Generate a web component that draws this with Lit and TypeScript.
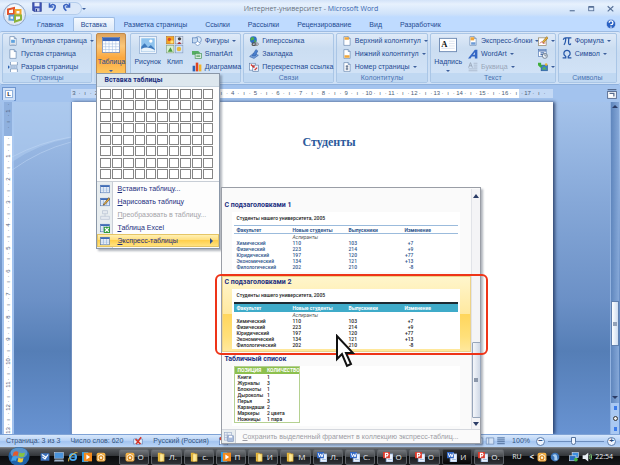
import { LitElement, html, css, svg, nothing, TemplateResult } from "lit";
import { customElement } from "lit/decorators.js";
import { classMap } from "lit/directives/class-map.js";

const sheet = svg`<path d="M3 1h7l3 3v11H3z" fill="#fff" stroke="#5b7da8"/><path d="M10 1v3h3" fill="#cfe0f4" stroke="#5b7da8"/>`;
const folder = svg`<path d="M3 1h5l2 2v12H3z" fill="#e8b93c"/><path d="M6 3h7v12H6z" fill="#fbe48b" stroke="#c9962a"/><path d="M8 3v12" stroke="#fff5c4"/>`;
const outlook = svg`<rect x="1" y="1" width="14" height="14" rx="3" fill="#f6b545"/><path d="M2 6l6-4 6 4v8H2z" fill="#fff4d6" stroke="#d8851b"/><circle cx="8" cy="9" r="3" fill="none" stroke="#d8851b" stroke-width="2"/>`;
const player = svg`<rect x="0" y="0" width="10" height="16" fill="#2c9be6"/><rect x="3" y="1" width="13" height="14" fill="#f38a1d"/><path d="M7 4l6 4-6 4z" fill="#fff"/>`;
const miniTable = svg`<rect x="1" y="2" width="14" height="12" fill="#fff" stroke="#4a71b0"/><rect x="1" y="2" width="14" height="3" fill="#3f6bb5"/><path d="M5.500 5v9M10.500 5v9M1 8h14M1 11h14" stroke="#8fb0dc"/>`;
const globe = svg`<circle cx="7" cy="6" r="5.500" fill="#2d6fc4"/><path d="M3 3q3-3 5 0t-2 3q-3 2-4 0zM8 7q3-1 4 1l-3 3z" fill="#4cae4a"/><rect x="5" y="11" width="6" height="4" rx="2" fill="none" stroke="#555" stroke-width="2"/><rect x="9" y="11" width="6" height="4" rx="2" fill="none" stroke="#888" stroke-width="1.500"/>`;

const ICONS: Record<string, TemplateResult> = {
  save: svg`<path d="M1 1h14v14H3l-2-2z" fill="#3f55b8" stroke="#2b3c8c"/><path d="M4 1h8v6H4z" fill="#e8edf9"/><path d="M5 10h7v5H5z" fill="#c3cce8"/><path d="M6 11h2v4H6z" fill="#2b3c8c"/>`,
  undo: svg`<path d="M4 2v6h6M4 8q5-7 9-2 1 4-4 8" fill="none" stroke="#3a62c0" stroke-width="2.500"/>`,
  redo: svg`<path d="M12 2v6H6M12 8Q7 1 3 6q-1 4 4 8" fill="none" stroke="#3a62c0" stroke-width="2.500"/>`,
  cover: svg`${sheet}<path d="M5 6h6v5H5z" fill="#5fa2dd"/><path d="M5 13h6" stroke="#5b7da8"/>`,
  blank: sheet,
  pagebreak: svg`<path d="M4 0v5h11V0M4 16v-5h11v5" fill="#fff" stroke="#5b7da8"/><path d="M4 8h12" stroke="#3e5f95" stroke-dasharray="2 1"/><path d="M0 5l3 3-3 3z" fill="#2c62b0"/>`,
  bigtable: svg`<rect x="0.500" y="0.500" width="31" height="27" fill="#fff" stroke="#3a62ad"/><rect x="1" y="1" width="30" height="6" fill="#3864b8"/><path d="M6.500 7v20M12.500 7v20M18.500 7v20M24.500 7v20M1 12h30M1 17h30M1 22h30" stroke="#a4bfe4"/>`,
  picture: svg`<rect x="1" y="1" width="30" height="30" fill="#eef4fb" stroke="#7d9cc6"/><rect x="4" y="4" width="24" height="24" fill="#8fc3ee"/><path d="M4 28V19l6-6 6 7 5-4 7 7v5z" fill="#3d79bd"/><path d="M4 28v-5q12-6 24 2v3z" fill="#e9f3fb"/><circle cx="21" cy="9" r="3" fill="#fff"/>`,
  clip: svg`<rect x="1" y="1" width="13" height="13" fill="#f5a623" stroke="#b8741a"/><circle cx="6" cy="6" r="3" fill="#d8472b"/><path d="M8 8h5v5H8z" fill="#ffe27a"/><rect x="17" y="1" width="13" height="13" fill="#dfe6f2" stroke="#7c8aa5"/><path d="M20 14q4-7 7 0z" fill="#a33"/><circle cx="24" cy="5" r="3" fill="#444"/><rect x="1" y="17" width="13" height="13" fill="#d9eed2" stroke="#7f9c7a"/><path d="M3 28l5-8 4 8z" fill="#4d9b3e"/><rect x="17" y="17" width="13" height="13" fill="#cfe2f8" stroke="#7d94bd"/><circle cx="23" cy="23" r="4" fill="#e3b73e"/>`,
  shapes: svg`<circle cx="10" cy="6" r="5" fill="#dce9f8" stroke="#4d78b4"/><rect x="1" y="3" width="8" height="8" fill="#c5daf2" stroke="#4d78b4"/><path d="M9 8l4 4-4 4-4-4z" fill="#fff" stroke="#4d78b4"/>`,
  smart: svg`<path d="M0 3h10l3 3-3 3H0z" fill="#54ae62"/><rect x="5" y="7" width="10" height="8" fill="#d8eedb" stroke="#3c8c4a"/><path d="M7 10h6M7 12h6" stroke="#3c8c4a"/>`,
  chart: svg`<rect x="1" y="6" width="4" height="9" fill="#2d62b5"/><rect x="6" y="1" width="4" height="14" fill="#e0431f"/><rect x="11" y="4" width="4" height="11" fill="#f2b32a"/>`,
  link: globe,
  bookmark: svg`<path d="M1 12l6-5 8 3-7 5z" fill="#7ea6dd" stroke="#2f5da6"/><path d="M5 11L11 1l3 2-4 8z" fill="#4a80cf" stroke="#2f5da6"/>`,
  crossref: svg`<rect x="1" y="2" width="9" height="11" fill="#fff" stroke="#5b7da8"/><rect x="6" y="5" width="9" height="10" fill="#e8effa" stroke="#5b7da8"/><path d="M3 4l5 5M8 9V5" stroke="#d0342c" stroke-width="2"/><path d="M9 13l4-4" stroke="#d0342c" stroke-width="2"/>`,
  header: svg`${sheet}<rect x="4" y="2" width="7" height="4" fill="#f0a63a"/>`,
  footer: svg`${sheet}<rect x="4" y="10" width="8" height="4" fill="#f0a63a"/>`,
  pagenum: svg`${sheet}<path d="M6 7h4M6 11h4M7 5v8M9 5v8" stroke="#4c617f"/>`,
  textbox: svg`<rect x="1" y="1" width="36" height="28" fill="#fff" stroke="#6f8bb4" stroke-width="2"/><path d="M21 7h12M21 12h12M21 17h12M5 22h28" stroke="#b6c6dc"/><text x="5" y="19" font-family="Liberation Serif, serif" font-size="18" font-weight="700" fill="#111">A</text>`,
  quick: svg`${sheet}<rect x="4" y="2" width="6" height="5" fill="#f0a63a"/><path d="M5 10h7v4H5z" fill="#6d9bd6"/>`,
  wordart: svg`<path d="M0 15L11 1h4v14h-4v-3H6l-2 3z" fill="#3467c4"/><path d="M8 9h3V5z" fill="#dce8fb"/>`,
  dropcap: svg`<path d="M1 9L4 1l3 8M2 6h4" fill="none" stroke="#9aa7ba" stroke-width="1.500"/><path d="M9 2h6M9 5h6M9 8h6M1 11h14M1 14h14" stroke="#9aa7ba"/>`,
  sign: svg`<rect x="1" y="3" width="12" height="12" fill="#fff" stroke="#8a7650"/><path d="M3 12q3-5 5 0l4-1" fill="none" stroke="#c33"/><path d="M7 9L14 1l2 2-7 8z" fill="#eab132" stroke="#8a6420"/>`,
  date: svg`<rect x="1" y="1" width="12" height="11" fill="#fff" stroke="#4a71b0"/><path d="M1 3h12M4 6h6M4 9h4" stroke="#4a71b0" stroke-width="2"/><circle cx="11" cy="11" r="4" fill="#eef4fc" stroke="#456"/><path d="M11 8v3h3" fill="none" stroke="#456"/>`,
  object: svg`<rect x="5" y="5" width="10" height="9" fill="#3c7fc7" stroke="#27598f"/><path d="M6 12l4-5 4 5z" fill="#57b651"/><path d="M0 1h5v4h3L4 9 0 5z" fill="#3fae3b"/><circle cx="13" cy="4" r="2" fill="#e6b53a"/>`,
  pi: svg`<path d="M2 6q1-3 4-3h9M6 3q0 8-3 11M11 3q-1 8 0 10 2 2 3-1" fill="none" stroke="#2456a8" stroke-width="2"/>`,
  omega: svg`<path d="M1 14h5v-2Q2 9 3 6q1-4 5-4t5 4q1 3-3 6v2h5" fill="none" stroke="#2456a8" stroke-width="2"/>`,
  help: svg`<circle cx="8" cy="8" r="7.500" fill="#2a62c4" stroke="#d7e6fb"/><path d="M5 6q0-3 3-3t3 3-3 3v1M8 12v2" fill="none" stroke="#fff" stroke-width="2"/>`,
  min: svg`<path d="M3 12h9" stroke="#566f96" stroke-width="2"/>`,
  max: svg`<rect x="3" y="5" width="9" height="7" fill="none" stroke="#566f96" stroke-width="1.500"/><path d="M3 5h9" stroke="#566f96" stroke-width="3"/>`,
  close: svg`<path d="M3 4l10 9M13 4L3 13" stroke="#566f96" stroke-width="2"/>`,
  table: miniTable,
  draw: svg`${miniTable}<path d="M6 11L14 1l2 2-8 9-3 1z" fill="#f0b23a" stroke="#5e4a2c"/>`,
  convert: svg`<path d="M4 1h8v5H4zM1 10h14v5H1zM8 6v4" fill="#e4e9f1" stroke="#9dabc2"/>`,
  excel: svg`${miniTable}<rect x="6" y="6" width="10" height="10" fill="#2f9a3d"/><path d="M8 8l6 6M14 8l-6 6" stroke="#fff" stroke-width="2"/>`,
  savesel: svg`<rect x="1" y="1" width="11" height="12" fill="#e9eef6" stroke="#98a9c6"/><path d="M1 5h11M1 9h11M5 1v12" stroke="#98a9c6"/><rect x="6" y="6" width="9" height="9" fill="#a9bbdb" stroke="#7c92b8"/><path d="M8 6h5v3H8z" fill="#fff"/>`,
  spell: svg`<path d="M1 5q4-2 7 1 3-3 7-1v8q-4-2-7 1-3-3-7-1z" fill="#e7f0fc" stroke="#5779ab"/><path d="M4 5l8 8M13 2L5 13" stroke="#d3352a" stroke-width="2.500"/>`,
  macro: svg`<rect x="1" y="3" width="13" height="11" fill="#fff" stroke="#4a71b0"/><path d="M1 5h13" stroke="#3f6bb5" stroke-width="3"/><circle cx="4" cy="4" r="3" fill="#d9402c"/>`,
  view: svg`<path d="M2 3h12v10H2zM6 3v10" fill="#d3e2f6" stroke="#6281ad"/>`,
  list: svg`<path d="M2 3h12M2 6h12M2 9h12M2 12h12" stroke="#6281ad" stroke-width="2"/>`,
  mail: svg`<rect x="1" y="2" width="14" height="12" rx="1" fill="#3d72bd"/><path d="M3 4l6 4M13 4l-5 7-4-3" stroke="#fff" stroke-width="2" fill="none"/>`,
  desk: svg`<rect x="1" y="1" width="14" height="9" fill="#4a93da" stroke="#b4cbe6"/><path d="M1 12h14l1 3H0z" fill="#9fb4cc"/>`,
  ie: svg`<circle cx="8" cy="8" r="5" fill="none" stroke="#48a8f0" stroke-width="3"/><path d="M4 8h9" stroke="#48a8f0" stroke-width="2"/><path d="M1 15Q-1 11 6 5T15 1" fill="none" stroke="#f0c23d" stroke-width="1.500"/>`,
  player,
  outlook,
  folder,
  word: svg`<path d="M5 3h11v13H5z" fill="#e9f1fc" stroke="#7aa0d4"/><rect x="0" y="0" width="11" height="10" fill="#2f66c4"/><path d="M2 2l2 6 2-5 2 5 2-6" fill="none" stroke="#fff" stroke-width="1.500"/><path d="M8 12h6" stroke="#7aa0d4"/>`,
  ppt: svg`<path d="M5 3h11v13H5z" fill="#e9f1fc" stroke="#7aa0d4"/><rect x="0" y="0" width="11" height="10" fill="#dc3a2c"/><path d="M4 9V2h3q2 2 0 4H4" fill="none" stroke="#fff" stroke-width="2"/><path d="M8 12h6" stroke="#7aa0d4"/>`,
  agent: svg`<circle cx="8" cy="8" r="7" fill="#3b74b8"/><path d="M4 5q5-3 7 1l1 7H7V8z" fill="#a9cdf0"/>`,
  net: svg`<rect x="5" y="1" width="10" height="8" fill="#3d8fdf" stroke="#cfe0f2"/><rect x="1" y="6" width="10" height="8" fill="#2c6fc0" stroke="#cfe0f2"/><circle cx="11" cy="12" r="3" fill="#45b548"/>`,
  sound: svg`<path d="M1 5h4l5-4v14l-5-4H1z" fill="#e8eef4"/><path d="M12 5q2 3 0 6M14 3q3 5 0 10" fill="none" stroke="#7fd07b" stroke-width="1.500"/>`,
  pane: svg`<rect x="1" y="4" width="14" height="11" fill="#fff" stroke="#556a8e" stroke-width="1.500"/><path d="M4 7h7v5M1 1h14" fill="none" stroke="#556a8e" stroke-width="2"/>`,
};

const icon = (name: string, box = "0 0 16 16", cls = "ic") =>
  html`<svg class=${cls} viewBox=${box} aria-hidden="true">${ICONS[name]}</svg>`;

interface Cmd { icon: string; text: string; arrow?: boolean; off?: boolean }
const cmd = (i: string, text: string, arrow = false, off = false): Cmd => ({ icon: i, text, arrow, off });

const TABS = ["Главная", "Вставка", "Разметка страницы", "Ссылки", "Рассылки", "Рецензирование", "Вид", "Разработчик"];
const FACULTIES = [
  ["Химический", "110", "103", "+7"],
  ["Физический", "223", "214", "+9"],
  ["Юридический", "197", "120", "+77"],
  ["Экономический", "134", "121", "+13"],
  ["Филологический", "202", "210", "-8"],
];
const STOCK = [
  ["Книги", "1"], ["Журналы", "3"], ["Блокноты", "1"], ["Дыроколы", "1"],
  ["Перья", "3"], ["Карандаши", "2"], ["Маркеры", "2 цвета"], ["Ножницы", "1 пара"],
];
const TASKS = [
  ["outlook", "О"], ["folder", "Л."], ["folder", "с."], ["player", "П"], ["folder", "И"], ["folder", "М"],
  ["word", "Л."], ["word", "С."], ["ppt", "О"], ["ppt", "О"], ["word", "И"], ["ppt", "О."],
];

/* One centimetre of a ruler is four marks: number, dot, half tick, dot. */
const rulerMarks = (count: number, first: number, offset: number) =>
  Array.from({ length: count }, (_, i) => {
    const k = i + offset;
    const n = Math.abs(first + Math.floor(k / 4));
    return k % 4 === 0 ? (n && n < 18 ? String(n) : "") : k % 4 === 2 ? "ı" : "·";
  });

@customElement("table-menu")
export class TableMenu extends LitElement {
  static styles = css`
    :host { display: block; width: 124px; box-sizing: border-box; background: #fdfdfd; border: 1px solid #8a97a8; box-shadow: 2px 2px 2px rgba(60, 70, 90, 0.4); color: #1c2f80; font-size: 7px; line-height: 13px; }
    * { box-sizing: border-box; }
    button { font: inherit; color: inherit; background: none; border: 0; padding: 0; margin: 0; text-align: left; display: flex; align-items: center; white-space: nowrap; }
    .head { background: #dde7ee; border-bottom: 1px solid #c5d2de; font-family: Roboto, sans-serif; font-weight: 700; padding-left: 7px; margin: 0; font-size: 7px; height: 13px; }
    .grid { display: grid; grid-template-columns: repeat(10, 1fr); grid-auto-rows: 10px; gap: 1px; padding: 2px 6px 2px 3px; border-bottom: 1px solid #c8ced6; height: 95px; align-content: space-between; }
    .grid button { background: #fff; border: 1px solid #858585; height: 10px; }
    .items { background: linear-gradient(90deg, #e9eef0 15px, #c9ced6 15px, #c9ced6 16px, #fdfdfd 16px); padding-bottom: 1px; }
    .items button { width: 100%; height: 13px; gap: 7px; padding-left: 3px; }
    .ic { width: 10px; height: 10px; flex: none; }
    .off { color: #a3a3a8; }
    .off .ic { opacity: 0.7; }
    .hot { background: linear-gradient(#fff4bf, #ffdf7f 45%, #ffcf4c 50%, #ffe68a); outline: 1px solid #e5c566; outline-offset: -1px; }
    .tip { margin-left: auto; margin-right: 6px; width: 0; height: 0; border: 3px solid transparent; border-left-color: #2d4f93; border-right: 0; }
    u { text-decoration-thickness: 1px; text-underline-offset: 1px; }
  `;
  private item(ic: string, text: string, cls = "") {
    return html`<button class=${cls} ?disabled=${cls === "off"}>${icon(ic)}<span><u>${text[0]}</u>${text.slice(1)}</span>${cls === "hot" ? html`<i class="tip"></i>` : nothing}</button>`;
  }
  render() {
    return html`
      <h2 class="head">Вставка таблицы</h2>
      <div class="grid">${Array.from({ length: 80 }, (_, i) => html`<button aria-label=${`${(i % 10) + 1} x ${Math.floor(i / 10) + 1}`}></button>`)}</div>
      <div class="items">
        ${this.item("table", "Вставить таблицу...")}
        ${this.item("draw", "Нарисовать таблицу")}
        ${this.item("convert", "Преобразовать в таблицу...", "off")}
        ${this.item("excel", "Таблица Excel")}
        ${this.item("table", "Экспресс-таблицы", "hot")}
      </div>`;
  }
}

@customElement("quick-tables")
export class QuickTables extends LitElement {
  static styles = css`
    :host { display: flex; flex-direction: column; width: 260px; box-sizing: border-box; background: #fafafa; border: 1px solid #9a9ea6; box-shadow: 2px 2px 2px rgba(60, 70, 90, 0.4); color: #1c2f80; font-size: 7px; }
    * { box-sizing: border-box; }
    .body { display: flex; padding-top: 1px; }
    .list { flex: 1; padding-top: 10px; height: 240px; }
    section { position: relative; height: 77px; padding: 0 11px 0 10px; }
    h3 { margin: 0 0 0 -8px; font-family: Roboto, sans-serif; font-size: 7px; line-height: 12px; height: 13px; }
    .thumb { background: #fff; height: 60px; padding: 2px 2px 0 2px; font-family: Roboto, sans-serif; font-size: 5px; line-height: 6px; color: #2f568c; }
    .cap { color: #222; font-weight: 500; padding: 0 2px; height: 11px; line-height: 8px; margin: 0; }
    table { border-collapse: collapse; table-layout: fixed; width: 100%; font-weight: 500; }
    th, td { padding: 0 2px; text-align: left; height: 6px; line-height: 6px; white-space: nowrap; }
    th { height: 8px; border-top: 1px solid #9bbbdc; border-bottom: 1px solid #9bbbdc; }
    .r span { display: inline-block; width: 9px; text-align: right; }
    .sub td { font-style: italic; font-weight: 400; color: #555; }
    .hot { background: linear-gradient(#fff6cd, #ffe9a0 50%, #ffd65c 50%, #ffe07a 80%, #ffe9a0); outline: 1px solid #ecd28a; outline-offset: -1px; z-index: 2; height: 76px; margin-bottom: 1px; }
    .hot .thumb { color: #222; }
    .hot th { background: #3fabc9; color: #fff; border-top: 2px solid #1c2a33; border-bottom: 0; height: 9px; }
    .mark { position: absolute; left: -7px; top: -2px; right: -17px; bottom: -3px; border: 2px solid #ee3418; border-radius: 6px; pointer-events: none; }
    .cursor { position: absolute; left: 113px; top: 58px; width: 20px; height: 34px; }
    .stock { width: 66px; border: 1px solid #b5d191; color: #222; }
    .stock th { background: #8dc04e; color: #fff; height: 7px; border: 0; }
    .stock th:first-child { width: 30px; }
    .last .thumb { padding-top: 0; }
    .bar { width: 9px; display: flex; flex-direction: column; align-items: center; background: #f4f4f6; border-left: 1px solid #e1e3e8; padding: 5px 0 3px; }
    .up, .down { width: 0; height: 0; border: 3px solid transparent; }
    .up { border-bottom: 4px solid #2b3c66; border-top: 0; }
    .down { border-top: 4px solid #2b3c66; border-bottom: 0; }
    .space { flex: 1; }
    .knob { width: 9px; height: 76px; margin-bottom: 4px; border: 1px solid #97a5ba; border-radius: 1px; background: linear-gradient(90deg, #f5f7fb, #cfd8e6); display: grid; place-items: center; }
    .grip { width: 4px; height: 4px; background: #8c98ab; }
    .foot { font: inherit; text-align: left; border: 0; border-top: 1px solid #d5d8de; margin: 0; padding: 0; background: linear-gradient(90deg, #e9eef0 13px, #c9ced6 13px, #c9ced6 14px, #fafafa 14px); color: #9c9ca4; display: flex; align-items: center; gap: 8px; height: 14px; font-size: 7px; white-space: nowrap; }
    .ic { width: 10px; height: 10px; margin-left: 2px; }
  `;
  private faculties() {
    return html`
      <div class="thumb">
        <p class="cap">Студенты нашего университета, 2005</p>
        <table>
          <tr><th>Факультет</th><th>Новые студенты</th><th>Выпускники</th><th>Изменение</th></tr>
          <tr class="sub"><td></td><td>Аспиранты</td><td></td><td></td></tr>
          ${FACULTIES.map((r) => html`<tr><td>${r[0]}</td><td>${r[1]}</td><td>${r[2]}</td><td class="r"><span>${r[3]}</span></td></tr>`)}
        </table>
      </div>`;
  }
  render() {
    return html`
      <div class="body">
        <div class="list">
          <section><h3>С подзаголовками 1</h3>${this.faculties()}</section>
          <section class="hot">
            <h3>С подзаголовками 2</h3>${this.faculties()}
            <div class="mark"></div>
            <svg class="cursor" viewBox="0 0 20 34" aria-hidden="true"><path d="M2 2v23l5-5 5 12 4-2-5-11h7z" fill="#fff" stroke="#111" stroke-width="2"/></svg>
          </section>
          <section class="last">
            <h3>Табличный список</h3>
            <div class="thumb">
              <table class="stock">
                <tr><th>ПОЗИЦИЯ</th><th>КОЛИЧЕСТВО</th></tr>
                ${STOCK.map((r) => html`<tr><td>${r[0]}</td><td>${r[1]}</td></tr>`)}
              </table>
            </div>
          </section>
        </div>
        <div class="bar"><i class="up"></i><i class="space"></i><div class="knob"><i class="grip"></i></div><i class="down"></i></div>
      </div>
      <button class="foot" disabled>${icon("savesel")}<span><u>С</u>охранить выделенный фрагмент в коллекцию экспресс-таблиц...</span></button>`;
  }
}

@customElement("app-root")
export class AppRoot extends LitElement {
  static styles = css`
    :host { display: flex; flex-direction: column; min-height: 100vh; position: relative; overflow: hidden; font-family: "Liberation Sans", Arial, sans-serif; font-size: 7px; line-height: 13px; color: #1e4a92; background: #bfdbff; }
    * { box-sizing: border-box; }
    button { font: inherit; color: inherit; background: none; border: 0; padding: 0; margin: 0; white-space: nowrap; }
    .ic { width: 10px; height: 10px; flex: none; }
    .arr { width: 0; height: 0; border: 2px solid transparent; border-top-color: #3c5f9c; border-bottom: 0; flex: none; }

    .top { position: relative; background: linear-gradient(#d3e3f8, #e7f1fd 4px, #cfe2fa 14px, #bfdbff 17px); }
    .title { display: flex; align-items: center; height: 17px; padding-left: 32px; }
    .qat { display: flex; align-items: center; gap: 5px; width: 50px; height: 13px; border-radius: 0 7px 7px 0; border: 1px solid #b4cdec; border-left: 0; background: #dbe8f9; }
    .name { flex: 1; text-align: center; color: #3967b0; font-family: "Open Sans", sans-serif; padding-right: 32px; }
    .name span { color: #6a7380; }
    .win { display: flex; gap: 10px; padding-right: 5px; }
    .win .ic { width: 9px; height: 9px; }
    .win button { display: flex; }
    .orb { position: absolute; left: 3px; top: 3px; width: 23px; height: 23px; z-index: 3; }
    .tabs { display: flex; align-items: stretch; height: 14px; padding: 0 4px 0 28px; }
    .tabs button { padding: 0 9px; border-radius: 2px 2px 0 0; }
    .tabs .on { background: linear-gradient(#f4f9ff, #dbe8f8); border: 1px solid #9dbbe2; border-bottom: 0; padding: 0 7px; }
    .tabs .help { margin-left: auto; align-self: center; display: flex; padding: 0; }

    .ribbon { display: flex; gap: 2px; height: 54px; padding: 1px 3px 1px 2px; background: linear-gradient(#d9e7f8, #c9dcf2 40%, #cfe1f6); border-top: 1px solid #9dbbe2; border-bottom: 1px solid #8fb1dd; border-radius: 2px; }
    .group { display: flex; flex-direction: column; border: 1px solid #aac6e6; border-radius: 2px; background: linear-gradient(#dfeaf8, #cbddf1 30%, #d3e4f8); min-width: 0; }
    .in { display: flex; flex: 1; min-height: 0; }
    .label { height: 9px; line-height: 9px; text-align: center; background: #c0d8f2; color: #4a74b2; }
    .col { display: flex; flex-direction: column; min-width: 0; }
    .cmd { display: flex; align-items: center; gap: 3px; height: 13px; padding: 0 3px; }
    .cmd.off { color: #98a5b8; }
    .big { position: relative; display: flex; flex-direction: column; align-items: center; padding: 2px 0 0; line-height: 11px; gap: 2px; }
    .pic { width: 18px; height: 18px; flex: none; }
    .big .arr { margin-top: 1px; }
    .tab-wrap { position: relative; width: 34px; z-index: 5; display: flex; background: linear-gradient(#dfeaf8, #cbddf1 30%, #c0d8f2); }
    .tab-wrap .big { margin-left: 2px; width: 30px; height: 50px; background: linear-gradient(#dfa45c, #fbc778 25%, #fba83f 50%, #ffd873); border: 1px solid #c08a4c; border-radius: 2px; }
    .drop { position: absolute; left: 2px; top: 40px; }
    .fly { position: absolute; left: 127px; top: 154px; }
    .g1 { flex: 91 1 0; } .g3 { flex: 112 1 0; } .g4 { flex: 91 1 0; } .g5 { flex: 93 1 0; } .g6 { flex: 127 1 0; } .g7 { flex: 59 1 0; }
    .g3 .in { gap: 5px; padding-left: 3px; }
    .g1 .in, .g4 .in, .g5 .in { padding-left: 2px; }
    .g6 .in { padding-left: 3px; gap: 3px; }

    .ruler { display: flex; height: 17px; background: #a3c3ee; align-items: center; padding: 0 3px 0 2px; }
    .corner { width: 14px; height: 14px; border: 1px solid #6f96cf; background: #cfe0f7; display: grid; place-items: center; color: #223; }
    .corner b { width: 8px; height: 8px; border: 1px solid #8fb1dd; background: #fff; line-height: 6px; font-size: 6px; text-align: center; }
    .hr { flex: 1; margin: 0 54px 0 55px; height: 9px; display: flex; background: linear-gradient(90deg, #c4d9f5 15%, #fff 15%, #fff 93%, #c4d9f5 93%); color: #4b5d78; font-size: 6px; line-height: 9px; }
    .hr span, .vr span { flex: 1 1 0; min-width: 0; min-height: 0; display: flex; justify-content: center; align-items: center; }

    .work { flex: 1; display: flex; min-height: 0; background: linear-gradient(#a5c3eb, #86a8d8 30%, #6b90c6 60%, #557eb6 75%, #6893d2); }
    .vr { width: 8px; margin-left: 4px; display: flex; flex-direction: column; color: #4b5d78; font-size: 6px; line-height: 8px; background: linear-gradient(#8fb0de 34px, #fff 34px); outline: 2px solid #a3c3ee; }
    .vr span { writing-mode: vertical-rl; transform: rotate(180deg); }
    .swoosh { width: 59px; align-self: stretch; flex: none; }
    .page { flex: 1; background: #fff; box-shadow: 2px 0 3px rgba(30, 50, 90, 0.8); border-left: 1px solid #6f8fc0; }
    h1 { margin: 32px 0 0; padding-left: 33px; text-align: center; font: 700 12px/16px "Liberation Serif", serif; color: #2c5a9c; }
    .gutter { width: 57px; }
    .vbar { width: 9px; margin-right: 1px; background: linear-gradient(90deg, #5f86bd, #86a8d8); display: flex; flex-direction: column; align-items: center; padding-top: 3px; border-left: 1px solid #93b3e0; }
    .up, .down { width: 0; height: 0; border: 3px solid transparent; flex: none; }
    .up { border-bottom: 3px solid #2b3c66; border-top: 0; }
    .down { border-top: 3px solid #2b3c66; border-bottom: 0; margin-bottom: 4px; }
    .s1 { flex: 194; } .s2 { flex: 50; }
    .knob { width: 8px; height: 45px; border: 1px solid #5f7fae; background: linear-gradient(90deg, #fff, #cddcf0); display: grid; place-items: center; flex: none; }
    .grip { width: 4px; height: 4px; background: #93a2b9; }
    .nav { width: 8px; height: 31px; background: #a9c8f2; display: flex; flex-direction: column; align-items: center; justify-content: space-around; flex: none; }
    .nav i { width: 3px; height: 4px; background: #3c7bea; }
    .nav b { width: 5px; height: 5px; border: 1px solid #333; border-radius: 50%; background: #eee; }

    .status { display: flex; align-items: center; height: 13px; background: linear-gradient(#d9e8fb, #b8d3f6 45%, #a3c4f0 55%, #bcd6f7); border-top: 1px solid #7fa3d6; padding: 0 4px 0 6px; color: #33547f; gap: 10px; line-height: 12px; }
    .right { margin-left: auto; display: flex; align-items: center; gap: 6px; }
    .views { display: flex; gap: 1px; }
    .zoom { display: flex; align-items: center; gap: 3px; }
    .zoom button { width: 9px; height: 9px; border: 1px solid #5a7cac; border-radius: 50%; background: #eef5ff; line-height: 6px; font-size: 8px; font-weight: 700; color: #2d4a77; padding: 0; }
    input[type="range"] { appearance: none; width: 56px; height: 9px; margin: 0; background: linear-gradient(transparent 4px, #6c8dbd 4px, #6c8dbd 5px, transparent 5px); }
    input[type="range"]::-webkit-slider-thumb { appearance: none; width: 5px; height: 8px; border: 1px solid #56749f; background: #f1f6ff; border-radius: 0 0 3px 3px; }

    .task { display: flex; align-items: center; height: 19px; background: linear-gradient(#8b8f94, #55595e 2px, #34373b 45%, #0b0c0e 50%, #17191c); color: #e9edf2; padding: 0 7px 0 8px; font-family: "Open Sans", sans-serif; }
    .start { width: 22px; height: 19px; display: flex; }
    .start svg { width: 22px; height: 19px; }
    .quick { display: flex; gap: 4px; padding: 0 13px 0 10px; }
    .apps { flex: 1; display: grid; grid-template-columns: repeat(12, 1fr); gap: 2px; }
    .apps button { display: flex; align-items: center; justify-content: center; gap: 3px; height: 16px; background: linear-gradient(#74787d, #45484c 48%, #1a1c1f 52%, #303338); border: 1px solid #5f6368; border-radius: 2px; font-size: 8px; line-height: 14px; }
    .apps .on { background: linear-gradient(#2b2d30, #050506); border-color: #45484c; }
    .tray { display: flex; align-items: center; gap: 3px; padding-left: 8px; font-size: 7px; }
    .lang { padding-right: 5px; }
    .tray b { font-size: 8px; }
    .tray i { width: 3px; }
  `;

  private cmds(list: Cmd[]) {
    return html`<div class="col">${list.map((c) => html`
      <button class=${classMap({ cmd: true, off: !!c.off })} ?disabled=${c.off} aria-label=${c.text || c.icon}>
        ${icon(c.icon)}${c.text ? html`<span>${c.text}</span>` : nothing}${c.arrow ? html`<i class="arr"></i>` : nothing}
      </button>`)}</div>`;
  }

  render() {
    return html`
      <header class="top">
        <svg class="orb" viewBox="0 0 46 46" aria-hidden="true">
          <circle cx="23" cy="23" r="22" fill="#dfe7f2" stroke="#8fa6c8" stroke-width="2"/>
          <circle cx="23" cy="20" r="17" fill="#f6f9fd"/>
          <path d="M10 13l12-3v12H10z" fill="none" stroke="#e2532a" stroke-width="4"/>
          <path d="M25 14h10v9H25z" fill="none" stroke="#f0a62b" stroke-width="4"/>
          <path d="M13 25h9v9l-9-1z" fill="none" stroke="#5d9fd8" stroke-width="4"/>
          <path d="M24 25h12v8l-12 4z" fill="none" stroke="#8cb33c" stroke-width="4"/>
        </svg>
        <div class="title">
          <div class="qat">
            <button aria-label="Сохранить">${icon("save")}</button>
            <button aria-label="Отменить">${icon("undo")}</button>
            <button aria-label="Вернуть">${icon("redo")}</button>
          </div>
          <i class="arr"></i>
          <div class="name"><span>Интернет-университет - </span>Microsoft Word</div>
          <div class="win">
            <button aria-label="Свернуть">${icon("min")}</button>
            <button aria-label="Развернуть">${icon("max")}</button>
            <button aria-label="Закрыть">${icon("close")}</button>
          </div>
        </div>
        <nav class="tabs">
          ${TABS.map((t) => html`<button class=${t === "Вставка" ? "on" : ""}>${t}</button>`)}
          <button class="help" aria-label="Справка">${icon("help")}</button>
        </nav>
      </header>

      <div class="ribbon">
        <div class="group g1">
          <div class="in">${this.cmds([cmd("cover", "Титульная страница", true), cmd("blank", "Пустая страница"), cmd("pagebreak", "Разрыв страницы")])}</div>
          <div class="label">Страницы</div>
        </div>
        <div class="tab-wrap">
          <button class="big">${icon("bigtable", "0 0 32 28", "pic")}Таблица<i class="arr"></i></button>
          <table-menu class="drop"></table-menu>
          <quick-tables class="fly"></quick-tables>
        </div>
        <div class="group g3">
          <div class="in">
            <button class="big">${icon("picture", "0 0 32 32", "pic")}Рисунок</button>
            <button class="big">${icon("clip", "0 0 32 32", "pic")}Клип</button>
            ${this.cmds([cmd("shapes", "Фигуры", true), cmd("smart", "SmartArt"), cmd("chart", "Диаграмма")])}
          </div>
          <div class="label">Иллюстрации</div>
        </div>
        <div class="group g4">
          <div class="in">${this.cmds([cmd("link", "Гиперссылка"), cmd("bookmark", "Закладка"), cmd("crossref", "Перекрестная ссылка")])}</div>
          <div class="label">Связи</div>
        </div>
        <div class="group g5">
          <div class="in">${this.cmds([cmd("header", "Верхний колонтитул", true), cmd("footer", "Нижний колонтитул", true), cmd("pagenum", "Номер страницы", true)])}</div>
          <div class="label">Колонтитулы</div>
        </div>
        <div class="group g6">
          <div class="in">
            <button class="big">${icon("textbox", "0 0 38 30", "pic")}Надпись<i class="arr"></i></button>
            ${this.cmds([cmd("quick", "Экспресс-блоки", true), cmd("wordart", "WordArt", true), cmd("dropcap", "Буквица", true, true)])}
            ${this.cmds([cmd("sign", "", true), cmd("date", ""), cmd("object", "", true)])}
          </div>
          <div class="label">Текст</div>
        </div>
        <div class="group g7">
          <div class="in">${this.cmds([cmd("pi", "Формула", true), cmd("omega", "Символ", true)])}</div>
          <div class="label">Символы</div>
        </div>
      </div>

      <div class="ruler">
        <div class="corner"><b>L</b></div>
        <div class="hr">${rulerMarks(85, -3, 0).map((m) => html`<span>${m}</span>`)}</div>
        ${icon("pane")}
      </div>

      <main class="work">
        <div class="vr">${rulerMarks(58, -2, 3).map((m) => html`<span>${m}</span>`)}</div>
        <svg class="swoosh" viewBox="0 0 59 332" preserveAspectRatio="none" aria-hidden="true">
          <path d="M0 0h59v36Q26 42 0 60z" fill="#b4cff2" opacity="0.5"/>
          <path d="M0 55Q28 40 59 35M0 68Q28 48 59 40" fill="none" stroke="#c3d9f6" opacity="0.5"/>
        </svg>
        <article class="page"><h1>Студенты</h1></article>
        <div class="gutter"></div>
        <div class="vbar">
          <i class="up"></i><i class="s1"></i><div class="knob"><i class="grip"></i></div><i class="s2"></i><i class="down"></i>
          <div class="nav"><i></i><b></b><i></i></div>
        </div>
      </main>

      <footer class="status">
        <span>Страница: 3 из 3</span><span>Число слов: 620</span>${icon("spell")}<span>Русский (Россия)</span>${icon("macro")}
        <div class="right">
          <div class="views">${icon("view")}${icon("view")}${icon("list")}</div>
          <label for="zoom">100%</label>
          <div class="zoom"><button aria-label="Уменьшить">−</button><input id="zoom" type="range" min="0" max="100" value="45"><button aria-label="Увеличить">+</button></div>
        </div>
      </footer>

      <div class="task">
        <button class="start" aria-label="Пуск">
          <svg viewBox="0 0 44 38"><ellipse cx="22" cy="19" rx="21" ry="19" fill="#1f62a8"/><ellipse cx="22" cy="12" rx="17" ry="11" fill="#7fb4e0" opacity="0.6"/>
            <path d="M11 11q5-4 10-1l-2 8q-5-2-10 1z" fill="#e4592b"/><path d="M23 11q5 3 11 0l-2 8q-6 2-11-1z" fill="#86c440"/>
            <path d="M8 21q5-3 10-1l-2 8q-4-2-10 1z" fill="#3fa0e8"/><path d="M21 21q5 3 10 1l-2 8q-5 2-10-1z" fill="#f6c932"/></svg>
        </button>
        <div class="quick">${["mail", "desk", "ie", "player", "outlook"].map((n) => icon(n))}</div>
        <div class="apps">${TASKS.map(([n, t], i) => html`<button class=${i === 10 ? "on" : ""}>${icon(n)}${t}</button>`)}</div>
        <div class="tray"><span class="lang">RU</span><b>&lt;</b>${icon("outlook")}${icon("agent")}<i></i>${icon("net")}${icon("sound")}<time>22:54</time></div>
      </div>`;
  }
}
